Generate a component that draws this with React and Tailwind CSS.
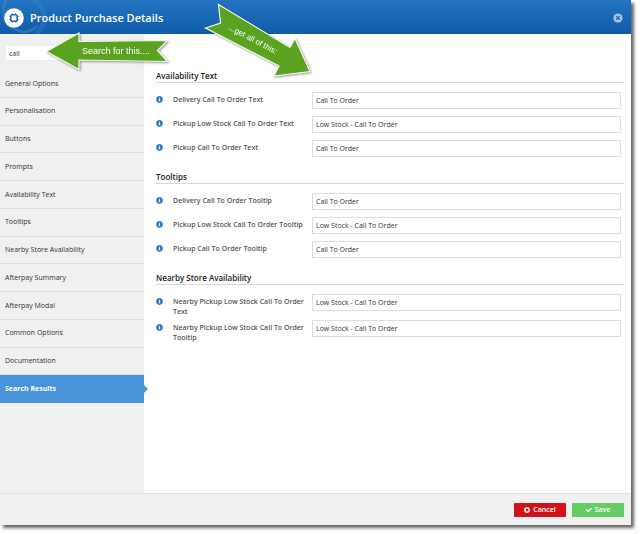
import { useState } from 'react'
import { FaCheck, FaInfoCircle, FaTimesCircle } from 'react-icons/fa'

const MENU_ITEMS = [
  'General Options',
  'Personalisation',
  'Buttons',
  'Prompts',
  'Availability Text',
  'Tooltips',
  'Nearby Store Availability',
  'Afterpay Summary',
  'Afterpay Modal',
  'Common Options',
  'Documentation',
  'Search Results',
]

const SECTIONS = [
  {
    title: 'Availability Text',
    fields: [
      { id: 'delivery-text', label: 'Delivery Call To Order Text', value: 'Call To Order' },
      { id: 'pickup-low-text', label: 'Pickup Low Stock Call To Order Text', value: 'Low Stock - Call To Order' },
      { id: 'pickup-text', label: 'Pickup Call To Order Text', value: 'Call To Order' },
    ],
  },
  {
    title: 'Tooltips',
    fields: [
      { id: 'delivery-tooltip', label: 'Delivery Call To Order Tooltip', value: 'Call To Order' },
      { id: 'pickup-low-tooltip', label: 'Pickup Low Stock Call To Order Tooltip', value: 'Low Stock - Call To Order' },
      { id: 'pickup-tooltip', label: 'Pickup Call To Order Tooltip', value: 'Call To Order' },
    ],
  },
  {
    title: 'Nearby Store Availability',
    fields: [
      { id: 'nearby-text', label: 'Nearby Pickup Low Stock Call To Order Text', value: 'Low Stock - Call To Order' },
      { id: 'nearby-tooltip', label: 'Nearby Pickup Low Stock Call To Order Tooltip', value: 'Low Stock - Call To Order' },
    ],
  },
]

function GearIcon() {
  return (
    <svg viewBox="0 0 20 20" className="h-5 w-5" aria-hidden="true">
      <circle cx="10" cy="10" r="9.8" fill="#fff" />
      <path d="M8.400 5.200v9.600M11.600 5.200v9.600M5.200 8.400h9.600M5.200 11.600h9.600" stroke="#4a86c4" strokeWidth="1" />
      <rect x="6.800" y="6.800" width="6.400" height="6.400" rx="1.800" fill="#fff" stroke="#1f6ab5" strokeWidth="1.600" />
    </svg>
  )
}

function Header() {
  return (
    <header className="relative flex h-[34px] shrink-0 items-center overflow-hidden bg-linear-to-b from-[#2474c1] to-[#0f5daa] pt-px pr-2 pl-1">
      <svg viewBox="0 0 60 34" className="absolute top-0 left-0 h-[34px] w-[60px]" fill="none" aria-hidden="true">
        <path d="M6 0C1 10 4 27 19 31c8 2 14-1 18-5" stroke="#4488c9" strokeWidth="2.5" opacity="0.5" />
        <path d="M33 0c9 5 13 13 11 22-1 5-4 9-8 12" stroke="#4488c9" strokeWidth="5" opacity="0.3" />
      </svg>
      <span className="relative">
        <GearIcon />
      </span>
      <h1 className="relative ml-[6px] pt-px text-[11px] font-semibold text-white">Product Purchase Details</h1>
      <button type="button" aria-label="Close" className="ml-auto">
        <svg viewBox="0 0 10 10" className="h-[10px] w-[10px]" aria-hidden="true">
          <circle cx="5" cy="5" r="4.6" fill="#a3c6e8" />
          <path d="M3.200 3.200l3.600 3.600M6.800 3.200l-3.600 3.600" stroke="#1f66b0" strokeWidth="1.300" />
        </svg>
      </button>
    </header>
  )
}

function Sidebar({ active, onSelect }) {
  const [query, setQuery] = useState('call')

  return (
    <aside className="flex w-36 shrink-0 flex-col bg-[#f0f0f0] pt-[11px]">
      <input
        type="text"
        aria-label="Search options"
        value={query}
        onChange={(event) => setQuery(event.target.value)}
        className="mx-[5px] h-4 border border-[#eeeeee] bg-white px-[3px] text-[7px] text-[#333] outline-none"
      />
      <nav className="mt-[9px] flex min-h-[333px] flex-col">
        {MENU_ITEMS.map((item) => (
          <a
            key={item}
            href="#"
            onClick={(event) => {
              event.preventDefault()
              onSelect(item)
            }}
            className={
              item === active
                ? 'relative flex flex-1 items-center border-b border-[#4a95da] bg-[#4a95da] px-[5px] pt-px text-[7px] font-bold text-white'
                : 'flex flex-1 items-center border-b border-[#dedede] px-[5px] pt-px text-[7px] text-[#333]'
            }
          >
            {item}
            {item === active && (
              <svg viewBox="0 0 4 8" className="absolute top-1/2 left-full h-2 w-1 -translate-y-1/2" aria-hidden="true">
                <path d="M0 0l4 4-4 4z" fill="#4a95da" />
              </svg>
            )}
          </a>
        ))}
      </nav>
    </aside>
  )
}

function Field({ id, label, value }) {
  return (
    <div className="flex items-start">
      <FaInfoCircle className="mt-1 h-[7px] w-[7px] shrink-0 text-[#2f7bcb]" aria-hidden="true" />
      <label htmlFor={id} className="ml-[10px] w-[139px] shrink-0 py-[3px] text-[7px] leading-[10px] font-semibold text-[#555]">
        {label}
      </label>
      <input
        id={id}
        type="text"
        defaultValue={value}
        className="mb-[7px] h-[17px] min-w-0 flex-1 border border-[#dddddd] bg-white px-[3px] text-[7px] text-[#333] outline-none"
      />
    </div>
  )
}

function Section({ title, fields }) {
  return (
    <section className="mb-[6px]">
      <h2 className="mb-[9px] border-b border-[#d6d6d6] text-[8px] leading-[13px] font-semibold text-[#222]">{title}</h2>
      <div className="pr-[3px]">
        {fields.map((field) => (
          <Field key={field.id} {...field} />
        ))}
      </div>
    </section>
  )
}

function Callouts() {
  return (
    <svg
      viewBox="0 0 320 84"
      className="pointer-events-none absolute top-0 left-0 h-[84px] w-80 drop-shadow-[1px_1px_1px_rgba(0,0,0,0.4)]"
      fontFamily="Liberation Sans, Arial, sans-serif"
    >
      <g fill="#5aa321" stroke="#f4faef" strokeWidth="1.200">
        <path d="M46.500 51.500L79 33v8.500L167.500 40.500L157.500 50.500L167.500 61.500L79 60v9.500z" />
        <path d="M218.500 4.500L290 47.500L295 38.500L310 71.500L274 76L279 66L205.500 28L220.500 23z" />
      </g>
      <g fill="#fff">
        <text x="82" y="54" fontSize="9">Search for this....</text>
        <text x="228" y="29" fontSize="8" transform="rotate(28 228 29)">...get all of this:</text>
      </g>
    </svg>
  )
}

export default function App() {
  const [active, setActive] = useState('Search Results')

  return (
    <div className="flex min-h-screen bg-white pr-[9px] pb-[9px] font-['Open_Sans',sans-serif]">
      <div className="relative flex flex-1 flex-col bg-white shadow-[3px_3px_3px_rgba(0,0,0,0.6)]">
        <Header />
        <div className="flex flex-1">
          <Sidebar active={active} onSelect={setActive} />
          <main className="min-w-0 flex-1 pt-[35px] pr-[7px] pl-3">
            {SECTIONS.map((section) => (
              <Section key={section.title} {...section} />
            ))}
          </main>
        </div>
        <footer className="flex h-8 shrink-0 items-center justify-end gap-[6px] border-t border-[#e2e2e2] bg-[#f0f0f0] pr-[7px]">
          <button type="button" className="flex h-[14px] w-[52px] items-center justify-center gap-[3px] rounded-[1px] bg-[#d41118] pt-px text-[7px] font-semibold text-white">
            <FaTimesCircle className="h-[6px] w-[6px]" aria-hidden="true" />
            Cancel
          </button>
          <button type="button" className="flex h-[14px] w-[52px] items-center justify-center gap-[3px] rounded-[1px] bg-[#66cc66] pt-px text-[7px] font-semibold text-white">
            <FaCheck className="h-[6px] w-[6px]" aria-hidden="true" />
            Save
          </button>
        </footer>
        <Callouts />
      </div>
    </div>
  )
}
